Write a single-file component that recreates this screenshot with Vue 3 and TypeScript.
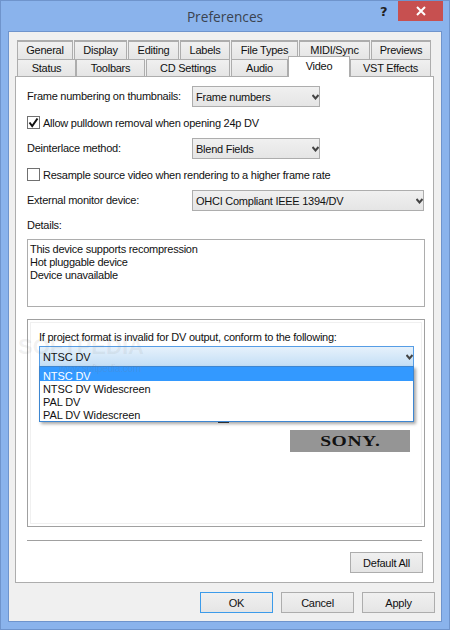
<script setup lang="ts">
const topTabs = ['General', 'Display', 'Editing', 'Labels', 'File Types', 'MIDI/Sync', 'Previews']
const bottomTabs = ['Status', 'Toolbars', 'CD Settings', 'Audio', 'Video', 'VST Effects']
const details = ['This device supports recompression', 'Hot pluggable device', 'Device unavailable']
const formats = ['NTSC DV', 'NTSC DV Widescreen', 'PAL DV', 'PAL DV Widescreen']
</script>

<template>
  <div class="window">
    <div class="titlebar">
      <div class="title">Preferences</div>
      <div class="help">?</div>
      <div class="close">
        <svg width="12" height="10" viewBox="0 0 12 10">
          <path d="M2 1 L10 9 M10 1 L2 9" stroke="#fff" stroke-width="2" />
        </svg>
      </div>
    </div>

    <div class="client">
      <div class="tabs">
        <div class="tab-row top">
          <div v-for="t in topTabs" :key="t" class="tab" :class="'t-' + t.replace(/[^A-Za-z]/g, '')">{{ t }}</div>
        </div>
        <div class="tab-row bottom">
          <div
            v-for="t in bottomTabs"
            :key="t"
            class="tab"
            :class="['b-' + t.replace(/[^A-Za-z]/g, ''), { active: t === 'Video' }]"
          >
            {{ t }}
          </div>
        </div>
      </div>

      <div class="panel">
        <div class="row first">
          <label class="field-label">Frame numbering on thumbnails:</label>
          <div class="select short">
            <span>Frame numbers</span>
            <svg class="chev" width="7" height="6" viewBox="0 0 7 6"><path d="M0.5 1 L3.5 4.5 L6.5 1" fill="none" stroke="#444" stroke-width="2" /></svg>
          </div>
        </div>
        <div class="check-row">
          <div class="box">
            <svg width="13" height="13" viewBox="0 0 13 13"><path d="M2.5 6.5 L5.2 10 L10.5 2.5" fill="none" stroke="#111" stroke-width="2" /></svg>
          </div>
          <span>Allow pulldown removal when opening 24p DV</span>
        </div>
        <div class="row">
          <label class="field-label">Deinterlace method:</label>
          <div class="select short">
            <span>Blend Fields</span>
            <svg class="chev" width="7" height="6" viewBox="0 0 7 6"><path d="M0.5 1 L3.5 4.5 L6.5 1" fill="none" stroke="#444" stroke-width="2" /></svg>
          </div>
        </div>
        <div class="check-row">
          <div class="box"></div>
          <span>Resample source video when rendering to a higher frame rate</span>
        </div>
        <div class="row">
          <label class="field-label">External monitor device:</label>
          <div class="select long">
            <span>OHCI Compliant IEEE 1394/DV</span>
            <svg class="chev" width="7" height="6" viewBox="0 0 7 6"><path d="M0.5 1 L3.5 4.5 L6.5 1" fill="none" stroke="#444" stroke-width="2" /></svg>
          </div>
        </div>
        <div class="details-label">Details:</div>
        <div class="details">
          <div v-for="d in details" :key="d">{{ d }}</div>
        </div>

        <div class="group">
          <div class="group-inner">
            <div class="group-label">If project format is invalid for DV output, conform to the following:</div>
            <div class="combo">
              <span>NTSC DV</span>
              <svg class="chev" width="7" height="6" viewBox="0 0 7 6"><path d="M0.5 1 L3.5 4.5 L6.5 1" fill="none" stroke="#444" stroke-width="2" /></svg>
            </div>
            <div class="dropdown">
              <div v-for="(f, i) in formats" :key="f" class="option" :class="{ selected: i === 0 }">{{ f }}</div>
            </div>
            <div class="peek"></div>
            <div class="sony"><span>SONY.</span></div>
          </div>
        </div>

        <div class="divider"></div>
        <div class="default-row">
          <div class="btn default-all">Default All</div>
        </div>
      </div>

      <div class="actions">
        <div class="btn ok">OK</div>
        <div class="btn">Cancel</div>
        <div class="btn">Apply</div>
      </div>
    </div>

    <div class="mark">SOFTPEDIA</div>
    <div class="mark-small">www.softpedia.com</div>
  </div>
</template>

<style>
html, body {
  margin: 0;
  background: #8ab3ec;
}
</style>

<style scoped>
.window {
  position: relative;
  width: 450px;
  height: 630px;
  box-sizing: border-box;
  border: 1px solid #6f94cc;
  background: #8ab3ec;
  padding: 0 7px 7px;
  display: flex;
  flex-direction: column;
  font-family: 'Liberation Sans', Arial, sans-serif;
  font-size: 11px;
  letter-spacing: -0.25px;
  color: #111;
  overflow: hidden;
}
.titlebar {
  height: 30px;
  flex: none;
  position: relative;
  display: flex;
  align-items: center;
  justify-content: center;
}
.title {
  font-size: 13.7px;
  letter-spacing: 0;
  color: #3a4350;
  font-family: 'Open Sans', 'Liberation Sans', sans-serif;
}
.help {
  position: absolute;
  left: 372px;
  top: 3px;
  font-family: 'DejaVu Sans', sans-serif;
  font-weight: 700;
  font-size: 13px;
  color: #222;
}
.close {
  position: absolute;
  left: 390px;
  top: 0;
  width: 45px;
  height: 20px;
  background: #c75050;
  display: flex;
  align-items: center;
  justify-content: center;
}
.client {
  flex: 1;
  background: #f0f0f0;
  border: 1px solid #6f94cc;
  display: flex;
  flex-direction: column;
  padding: 8px 6px 0 6px;
  min-height: 0;
}
.tabs {
  flex: none;
  display: flex;
  flex-direction: column;
}
.tab-row {
  display: flex;
  align-items: flex-end;
}
.tab-row.top {
  height: 19px;
}
.tab-row.bottom {
  height: 17px;
  position: relative;
  z-index: 2;
}
.tab {
  box-sizing: border-box;
  height: 100%;
  border: 2px solid #adadad;
  border-bottom: 0;
  border-right-width: 1px;
  border-left-width: 1px;
  background: linear-gradient(#f0f0f0, #e5e5e5);
  display: flex;
  align-items: center;
  justify-content: center;
  margin-left: 1px;
}
.tab-row.top .tab {
  padding-bottom: 2px;
}
.tab-row.bottom .tab {
  border-top-width: 1px;
}
.t-General { width: 56px; margin-left: 2px; }
.t-Display { width: 53px; }
.t-Editing { width: 51px; }
.t-Labels { width: 50px; }
.t-FileTypes { width: 67px; }
.t-MIDISync { width: 71px; }
.t-Previews { width: 60px; }
.b-Status { width: 59px; margin-left: 2px; }
.tab.b-Toolbars { width: 69px; margin-left: 0; }
.b-CDSettings { width: 84px; }
.b-Audio { width: 57px; }
.tab.b-Video {
  width: 62px;
  height: 21px;
  margin: -4px 0 -1px 0;
  background: #fff;
  border-width: 1px 1px 0;
  padding: 0 0 2px;
}
.tab.b-VSTEffects { width: 81px; margin-left: 0; }
.panel {
  position: relative;
  flex: 1;
  background: #fff;
  border: 1px solid #adadad;
  box-sizing: border-box;
  width: 419px;
  padding: 9px 9px 0 11px;
  display: flex;
  flex-direction: column;
  min-height: 0;
}
.row {
  display: flex;
  align-items: center;
  margin-top: 9px;
}
.row.first {
  margin-top: 0;
}
.field-label {
  width: 165px;
  flex: none;
  position: relative;
  top: -1px;
}
.select {
  box-sizing: border-box;
  height: 21px;
  border: 1px solid #adadad;
  background: linear-gradient(#f0f0f0, #e5e5e5);
  display: flex;
  align-items: center;
  justify-content: space-between;
  padding: 0 0 0 3px;
}
.short { width: 128px; }
.long { width: 233px; }
.check-row {
  display: flex;
  align-items: center;
  gap: 3px;
  height: 13px;
  margin-top: 9px;
}
.box {
  box-sizing: border-box;
  width: 13px;
  height: 13px;
  border: 1px solid #707070;
  background: #fff;
  flex: none;
}
.box svg { display: block; margin: -1px; }
.details-label {
  margin-top: 7px;
  line-height: 14px;
}
.details {
  box-sizing: border-box;
  margin-top: 7px;
  height: 68px;
  width: 398px;
  border: 1px solid #adadad;
  padding: 3px 2px;
  line-height: 13px;
}
.group {
  box-sizing: border-box;
  margin-top: 12px;
  width: 398px;
  height: 208px;
  border: 1px solid #a0a0a0;
  padding: 2px;
  flex: none;
}
.group-inner {
  position: relative;
  box-sizing: border-box;
  height: 100%;
  border: 1px solid #f0f0f0;
  padding: 7px 8px;
}
.group-label {
  line-height: 14px;
}
.combo {
  box-sizing: border-box;
  margin-top: 2px;
  height: 21px;
  width: 375px;
  border: 1px solid #569de5;
  background: linear-gradient(#e6f1fb, #c4dff6);
  display: flex;
  align-items: center;
  justify-content: space-between;
  padding-left: 3px;
  letter-spacing: -0.1px;
}
.dropdown {
  position: absolute;
  left: 8px;
  top: 43px;
  width: 375px;
  box-sizing: border-box;
  border: 1px solid #3d86d1;
  background: #fff;
  box-shadow: 2px 2px 3px rgba(0, 0, 0, 0.35);
  z-index: 3;
  line-height: 16px;
  padding-bottom: 1px;
  letter-spacing: -0.1px;
}
.option {
  padding-left: 3px;
  height: 13px;
}
.option.selected {
  box-sizing: border-box;
  height: 14px;
  padding-top: 1px;
  background: #3399ff;
  color: #fff;
}
.peek {
  position: absolute;
  left: 187px;
  top: 98px;
  width: 11px;
  height: 2px;
  background: #444;
}
.sony {
  position: absolute;
  left: 259px;
  top: 107px;
  width: 120px;
  height: 22px;
  background: #959595;
  color: #111;
  font-family: 'Liberation Serif', serif;
  font-weight: 700;
  font-size: 14.5px;
  letter-spacing: 0.4px;
  display: flex;
  align-items: center;
  justify-content: center;
}
.sony span {
  display: block;
  transform: scaleX(1.35);
}
.divider {
  margin-top: 13px;
  width: 395px;
  height: 1px;
  background: #a0a0a0;
  flex: none;
}
.default-row {
  display: flex;
  justify-content: flex-end;
  margin-top: 11px;
  width: 396px;
}
.btn {
  box-sizing: border-box;
  width: 73px;
  height: 21px;
  border: 1px solid #adadad;
  background: linear-gradient(#f0f0f0, #e5e5e5);
  display: flex;
  align-items: center;
  justify-content: center;
}
.actions {
  flex: none;
  height: 38px;
  display: flex;
  justify-content: flex-end;
  gap: 8px;
  padding-top: 9px;
  box-sizing: border-box;
}
.btn.ok {
  border-color: #3c9bea;
}
.mark {
  position: absolute;
  left: 17px;
  top: 333px;
  font-size: 22px;
  font-weight: 700;
  letter-spacing: 0;
  color: rgba(120, 120, 120, 0.1);
  pointer-events: none;
}
.mark-small {
  position: absolute;
  left: 58px;
  top: 362px;
  font-size: 10px;
  color: rgba(120, 120, 120, 0.18);
  pointer-events: none;
  z-index: 4;
}
</style>
